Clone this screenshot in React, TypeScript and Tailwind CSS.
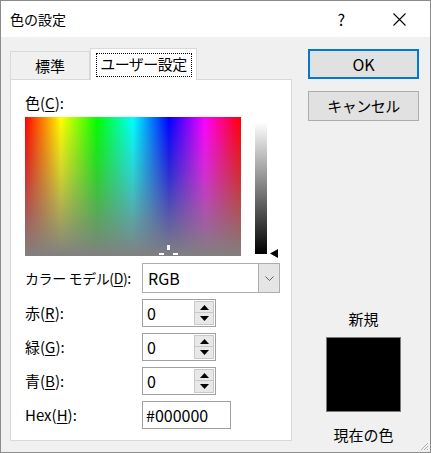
import React from 'react';

function Mn({ c }: { c: string }) {
  return <span className="underline underline-offset-2">{c}</span>;
}

function SpinBox({ value }: { value: string }) {
  return (
    <div className="flex h-[28px] w-[74px] items-center border border-[#a0a0a0] bg-white">
      <span className="flex-1 pl-[4px] text-[16px] leading-none">{value}</span>
      <div className="mr-[1px] flex w-[20px] flex-col gap-0">
        <div className="flex h-[12px] items-center justify-center border border-[#c8c8c8] bg-[#e8e8e8]">
          <svg width="9" height="5" viewBox="0 0 9 5"><path d="M0 5 L4.5 0 L9 5 Z" fill="#000" /></svg>
        </div>
        <div className="flex h-[12px] items-center justify-center border border-t-0 border-[#c8c8c8] bg-[#e8e8e8]">
          <svg width="9" height="5" viewBox="0 0 9 5"><path d="M0 0 L4.5 5 L9 0 Z" fill="#000" /></svg>
        </div>
      </div>
    </div>
  );
}

export default function App() {
  const rows = [
    { label: '赤', key: 'R' },
    { label: '緑', key: 'G' },
    { label: '青', key: 'B' },
  ];

  return (
    <div className="flex h-[453px] w-[431px] flex-col border border-[#8c8c8c] bg-[#f0f0f0] font-['Noto_Sans_CJK_JP',sans-serif] text-[15px] text-black">
      {/* title bar */}
      <div className="flex h-[36px] shrink-0 items-center bg-white pl-[9px]">
        <span className="flex-1 text-[14px]">色の設定</span>
        <span className="mr-[48px] text-[16px]">?</span>
        <svg width="13" height="13" viewBox="0 0 13 13" className="mr-[24px]">
          <path d="M0.5 0.5 L12.5 12.5 M12.5 0.5 L0.5 12.5" stroke="#000" strokeWidth="1.1" />
        </svg>
      </div>

      <div className="relative flex flex-1">
        {/* left: tabs + panel */}
        <div className="ml-[9px] mt-[11px] flex w-[282px] flex-col">
          <div className="relative z-10 flex h-[31px] items-end">
            <div className="flex h-[28px] w-[80px] items-center justify-center border border-b-0 border-[#d9d9d9] bg-[#f0f0f0] pt-[2px]">
              標準
            </div>
            <div className="-mb-[1px] flex h-[32px] w-[107px] items-center justify-center border border-b-0 border-[#d9d9d9] bg-white">
              <span className="flex h-[24px] w-[96px] items-center justify-center whitespace-nowrap border border-dotted border-black tracking-[-0.5px]">
                ユーザー設定
              </span>
            </div>
          </div>

          <div className="flex h-[362px] flex-col border border-[#d9d9d9] bg-white pl-[14px] pt-[13px]">
            <div className="h-[20px] leading-[20px]">
              色(<Mn c="C" />):
            </div>
            <div className="mt-[4px] flex items-start">
              <div className="relative h-[139px] w-[216px] bg-[linear-gradient(to_right,#ff0000,#ffff00,#00ff00,#00ffff,#0000ff,#ff00ff,#ff0000)]">
                <div className="absolute inset-0 bg-[linear-gradient(to_bottom,rgba(128,128,128,0),rgba(128,128,128,0.35)_40%,#808080)]" />
                <div className="absolute left-[142px] top-[128px] h-[5px] w-[3px] bg-white" />
                <div className="absolute left-[134px] top-[136px] h-[2px] w-[5px] bg-white" />
                <div className="absolute left-[148px] top-[136px] h-[2px] w-[5px] bg-white" />
              </div>
              <div className="ml-[14px] mt-[5px] h-[132px] w-[12px] bg-[linear-gradient(to_bottom,#ffffff,#000000)]" />
              <svg width="8" height="9" viewBox="0 0 8 9" className="ml-[3px] mt-[132px]">
                <path d="M0 4.5 L8 0 L8 9 Z" fill="#000" />
              </svg>
            </div>

            <div className="mt-[5px] flex h-[30px] items-center">
              <div className="w-[117px] shrink-0 whitespace-nowrap text-[14px] tracking-[-0.4px]">
                カラー モデル(<Mn c="D" />):
              </div>
              <div className="flex h-[30px] w-[138px] items-center border border-[#adadad] bg-white">
                <span className="flex-1 pl-[5px] text-[16px]">RGB</span>
                <div className="flex h-full w-[21px] items-center justify-center border-l border-[#adadad] bg-[#e5e5e5]">
                  <svg width="9" height="5" viewBox="0 0 9 5">
                    <path d="M0.5 0.5 L4.5 4.5 L8.5 0.5" stroke="#606060" fill="none" strokeWidth="1" />
                  </svg>
                </div>
              </div>
            </div>

            <div className="mt-[6px] flex flex-col gap-[6px]">
              {rows.map((r) => (
                <div key={r.key} className="flex h-[28px] items-center">
                  <div className="w-[117px] shrink-0">
                    {r.label}(<Mn c={r.key} />):
                  </div>
                  <SpinBox value="0" />
                </div>
              ))}
              <div className="flex h-[28px] items-center">
                <div className="w-[117px] shrink-0">
                  Hex(<Mn c="H" />):
                </div>
                <div className="flex h-[28px] w-[89px] items-center border border-[#a0a0a0] bg-white pl-[3px] text-[16px]">
                  #000000
                </div>
              </div>
            </div>
          </div>
        </div>

        {/* right: buttons + preview */}
        <div className="ml-[16px] mt-[12px] flex w-[111px] flex-col">
          <button className="flex h-[30px] items-center justify-center border-2 border-[#0078d7] bg-[#e1e1e1] text-[16px]">
            OK
          </button>
          <button className="mt-[12px] flex h-[30px] items-center justify-center border border-[#adadad] bg-[#e1e1e1] tracking-[-0.5px]">
            キャンセル
          </button>
          <div className="mt-auto flex flex-col items-center pb-[6px]">
            <span>新規</span>
            <div className="mt-[6px] h-[75px] w-[75px] border border-[#7a7a7a] bg-black" />
            <span className="mt-[12px]">現在の色</span>
          </div>
        </div>

        {/* resize grip */}
        <svg width="10" height="10" viewBox="0 0 10 10" className="absolute bottom-[1px] right-[1px]">
          <path d="M9 2 L2 9 M9 5 L5 9 M9 8 L8 9" stroke="#b0b0b0" strokeWidth="1" />
        </svg>
      </div>
    </div>
  );
}
